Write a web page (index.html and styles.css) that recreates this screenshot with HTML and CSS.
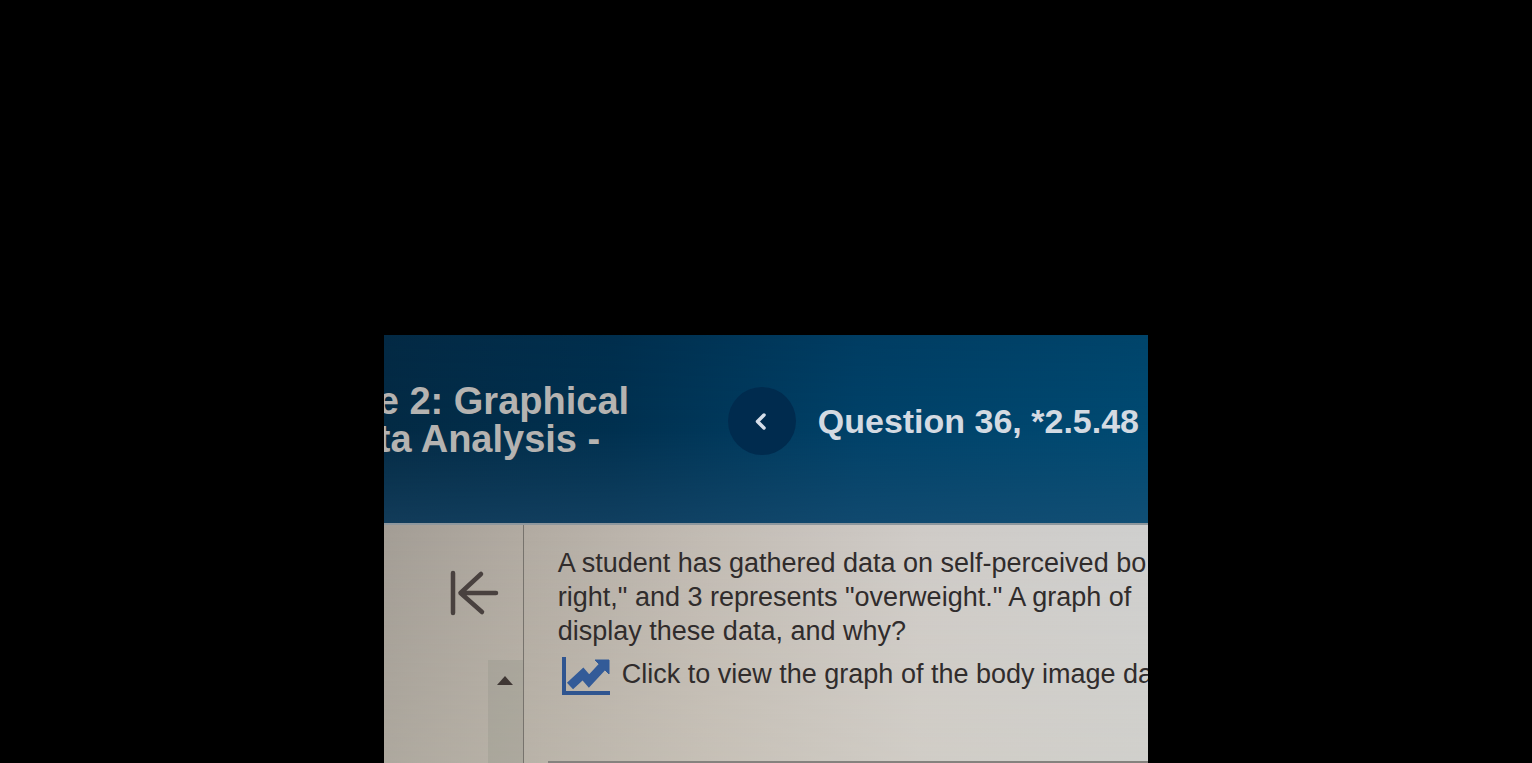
FILE: index.html
```html
<!DOCTYPE html>
<html lang="en">
<head>
<meta charset="utf-8">
<title>Question 36, *2.5.48</title>
<meta name="viewport" content="width=device-width, initial-scale=1">
<link rel="stylesheet" href="styles.css">
</head>
<body>
<div class="page">
  <div class="viewer">
    <header class="header">
      <h1 class="title">e 2: Graphical<br>ta Analysis -</h1>
      <button class="prev" type="button" aria-label="Previous question">
        <svg width="18" height="20" viewBox="0 0 18 20" fill="none" stroke="#d5deea" stroke-width="3.500" stroke-linecap="round" stroke-linejoin="round" aria-hidden="true"><path d="M11 4 4.500 10.500 11 17"/></svg>
      </button>
      <h2 class="question">Question 36, *2.5.48</h2>
    </header>
    <div class="body">
      <aside class="side">
        <button class="collapse" type="button" aria-label="Collapse panel">
          <svg width="50" height="46" viewBox="0 0 50 46" fill="none" stroke="#49413f" stroke-width="4.500" stroke-linecap="round" stroke-linejoin="round" aria-hidden="true"><path d="M4 3V43M11.500 23H47M32 4 11.500 23 33 42"/></svg>
        </button>
        <div class="track">
          <button class="up" type="button" aria-label="Scroll up">
            <svg width="16" height="10" viewBox="0 0 16 10" fill="#3f3734" aria-hidden="true"><path d="M8 0 16 9H0Z"/></svg>
          </button>
        </div>
      </aside>
      <main class="content">
        <p class="text">A student has gathered data on self-perceived bo<br>right," and 3 represents "overweight." A graph of<br>display these data, and why?</p>
        <a class="graph" href="#graph">
          <svg class="chart" width="48" height="40" viewBox="0 0 48 40" fill="none" aria-hidden="true"><path d="M2 1V37H48" stroke="#2f5590" stroke-width="4"/><path d="M8 30 21 18 27 25 40 11" stroke="#335b98" stroke-width="9"/><path d="M33 4H47V18Z" fill="#335b98" stroke="#335b98"/></svg>
          <span>Click to view the graph of the body image da</span>
        </a>
        <hr class="rule">
      </main>
    </div>
  </div>
</div>
</body>
</html>
```
FILE: styles.css
```css
* {
  box-sizing: border-box;
}

body {
  margin: 0;
  background: #000;
  color: #302c2c;
  font-family: "Liberation Sans", Arial, sans-serif;
}

button {
  padding: 0;
  border: 0;
  background: none;
}

.page {
  display: flex;
  flex-direction: column;
  justify-content: flex-end;
  align-items: center;
  min-height: 100vh;
}

.viewer {
  width: 49.9%;
  overflow: hidden;
}

.header {
  display: flex;
  align-items: center;
  height: 188px;
  padding-bottom: 16px;
  background:
    linear-gradient(180deg, rgba(0, 35, 65, 0.150), rgba(0, 70, 100, 0) 50%, rgba(40, 85, 120, 0.400)),
    linear-gradient(90deg, #032a44, #00304f 30%, #004168 62%, #004a72);
}

.title {
  flex: none;
  width: 350px;
  margin: 0 0 2px -6px;
  color: #b5b3b1;
  font-size: 38px;
  line-height: 38px;
  white-space: nowrap;
}

.prev {
  display: grid;
  place-items: center;
  flex: none;
  width: 68px;
  height: 68px;
  border-radius: 50%;
  background: #002b4e;
}

.question {
  margin: 0 0 0 22px;
  color: #d3dae2;
  font-size: 34px;
  line-height: 40px;
  white-space: nowrap;
}

.body {
  display: flex;
  border-top: 2px solid #8e979d;
  background:
    linear-gradient(180deg, rgba(215, 212, 200, 0), rgba(215, 212, 195, 0.200)),
    linear-gradient(90deg, #a39d95, #b1aaa1 18%, #c2bbb3 42%, #cfcbc7 70%, #cfcfce);
}

.side {
  display: flex;
  flex-direction: column;
  align-items: flex-end;
  flex: none;
  width: 140px;
  border-right: 1px solid #77736d;
}

.collapse {
  height: 46px;
  margin: 45px 24px 44px 0;
}

.track {
  flex: 1;
  width: 35px;
  padding-top: 14px;
  background: rgba(135, 138, 128, 0.250);
}

.up {
  display: block;
  height: 10px;
  margin: 0 auto;
}

.content {
  flex: 1;
  min-width: 0;
  padding-top: 21px;
  white-space: nowrap;
}

.text {
  margin: 0 0 8px;
  padding-left: 34px;
  font-size: 27px;
  line-height: 34px;
}

.graph {
  display: flex;
  gap: 12px;
  padding-left: 38px;
  color: inherit;
  font-size: 27px;
  line-height: 36px;
  text-decoration: none;
}

.chart {
  flex: none;
}

.rule {
  height: 2px;
  margin: 65px 0 0 24px;
  border: 0;
  background: #85827e;
}
```
